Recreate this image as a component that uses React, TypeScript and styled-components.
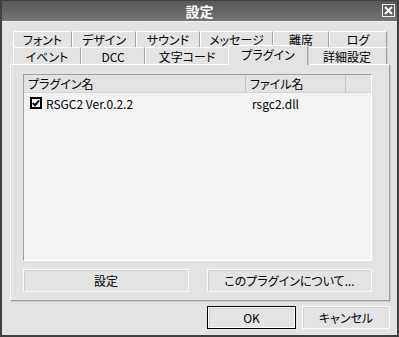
import React from 'react';
import styled, { createGlobalStyle } from 'styled-components';

const GlobalStyle = createGlobalStyle`
  html, body {
    margin: 0;
    padding: 0;
    background: #e3e3e3;
  }
  body {
    font-family: 'Noto Sans CJK JP', 'Liberation Sans', sans-serif;
    font-size: 12px;
    font-feature-settings: 'palt';
    color: #000;
  }
`;

const Window = styled.div`
    width: 399px;
    height: 337px;
    box-sizing: border-box;
    background: #e3e3e3;
    border: 2px solid #404040;
    border-top: 1px solid #404040;
    display: flex;
    flex-direction: column;
`;

const TitleBar = styled.div`
    height: 20px;
    flex-shrink: 0;
    background: linear-gradient(#585858, #747474);
    border-bottom: 1px solid #f2f2f2;
    display: flex;
    align-items: center;
    justify-content: center;
    position: relative;
    color: #fff;
    font-weight: bold;
    font-size: 14px;
`;

const CloseBox = styled.div`
    position: absolute;
    right: 2px;
    top: 3px;
    width: 11px;
    height: 11px;
    border: 1px solid #f0f0f0;
    background: #5e5e5e;
    display: flex;
    align-items: center;
    justify-content: center;
`;

const Body = styled.div`
    flex: 1;
    padding: 9px 7px 0 8px;
    display: flex;
    flex-direction: column;
`;

const TabStrip = styled.div`
    margin-left: 3px;
    width: 374px;
    display: flex;
    flex-direction: column;
`;

const TabRow = styled.div<{ height: number }>`
    display: flex;
    height: ${p => p.height}px;
    align-items: flex-end;
`;

const Tab = styled.div<{ width: number; active?: boolean }>`
    box-sizing: border-box;
    width: ${p => (p.active ? p.width + 2 : p.width)}px;
    height: ${p => (p.active ? 'calc(100% + 3px)' : '100%')};
    margin: ${p => (p.active ? '0 -1px -1px -1px' : '0')};
    background: #e3e3e3;
    border-top: 1px solid #fff;
    border-left: 1px solid #fff;
    border-right: 1px solid #a0a0a0;
    border-top-left-radius: 2px;
    border-top-right-radius: 2px;
    box-shadow: 1px 0 0 #d0d0d0;
    display: flex;
    align-items: center;
    justify-content: center;
    padding-bottom: ${p => (p.active ? 3 : 0)}px;
    position: relative;
    z-index: ${p => (p.active ? 2 : 1)};
    white-space: nowrap;
`;

const Panel = styled.div`
    box-sizing: border-box;
    width: 380px;
    height: 237px;
    background: #e3e3e3;
    border-top: 1px solid #fff;
    border-left: 1px solid #fff;
    border-right: 1px solid #a0a0a0;
    border-bottom: 1px solid #a0a0a0;
    box-shadow: 1px 1px 0 #c8c8c8;
    padding: 9px 16px 0 12px;
    display: flex;
    flex-direction: column;
`;

const ListView = styled.div`
    box-sizing: border-box;
    width: 349px;
    height: 187px;
    background: #f3f3f3;
    border-top: 1px solid #a0a0a0;
    border-left: 1px solid #a0a0a0;
    border-right: 1px solid #fff;
    border-bottom: 1px solid #fff;
    display: flex;
    flex-direction: column;
`;

const HeaderRow = styled.div`
    display: flex;
    height: 17px;
    background: #e3e3e3;
    border-bottom: 1px solid #d2d2d2;
`;

const HeaderCell = styled.div<{ width?: number }>`
    box-sizing: border-box;
    width: ${p => (p.width ? `${p.width}px` : 'auto')};
    flex: ${p => (p.width ? '0 0 auto' : '1')};
    padding-left: 4px;
    border-right: ${p => (p.width ? '1px solid #c4c4c4' : 'none')};
    display: flex;
    align-items: center;
`;

const ItemRow = styled.div`
    display: flex;
    height: 18px;
    align-items: center;
    margin-top: 1px;
`;

const ItemCell = styled.div<{ width?: number }>`
    box-sizing: border-box;
    width: ${p => (p.width ? `${p.width}px` : 'auto')};
    display: flex;
    align-items: center;
    gap: 4px;
    padding-left: 6px;
`;

const CheckBox = styled.div`
    box-sizing: border-box;
    width: 12px;
    height: 12px;
    border: 2px solid #000;
    background: #fff;
    display: flex;
    align-items: center;
    justify-content: center;
`;

const PanelButtons = styled.div`
    display: flex;
    gap: 18px;
    margin-top: 8px;
`;

const Button = styled.button<{ width: number; isDefault?: boolean }>`
    box-sizing: border-box;
    width: ${p => p.width}px;
    height: 23px;
    padding: 0;
    font: inherit;
    color: #000;
    background: #e3e3e3;
    border: 1px solid ${p => (p.isDefault ? '#000' : '#fafafa')};
    box-shadow: ${p =>
        p.isDefault
            ? 'inset 1px 1px 0 #fff, inset -1px -1px 0 #fff, inset 2px 2px 0 #cfcfcf'
            : 'inset 1px 1px 0 #cfcfcf'};
    display: flex;
    align-items: center;
    justify-content: center;
`;

const DialogButtons = styled.div`
    display: flex;
    justify-content: flex-end;
    gap: 6px;
    margin-top: 5px;
`;

const rowOne = [
    { label: 'フォント', width: 59 },
    { label: 'デザイン', width: 64 },
    { label: 'サウンド', width: 64 },
    { label: 'メッセージ', width: 73 },
    { label: '離席', width: 56 },
    { label: 'ログ', width: 58 },
];

const rowTwo = [
    { label: 'イベント', width: 68 },
    { label: 'DCC', width: 64 },
    { label: '文字コード', width: 84 },
    { label: 'プラグイン', width: 78, active: true },
    { label: '詳細設定', width: 80 },
];

export default function App() {
    return (
        <>
            <GlobalStyle />
            <Window>
                <TitleBar>
                    設定
                    <CloseBox>
                        <svg width="9" height="9" viewBox="0 0 9 9">
                            <path d="M1 1 L8 8 M8 1 L1 8" stroke="#fff" strokeWidth="2" />
                        </svg>
                    </CloseBox>
                </TitleBar>
                <Body>
                    <TabStrip>
                        <TabRow height={16}>
                            {rowOne.map(t => (
                                <Tab key={t.label} width={t.width}>{t.label}</Tab>
                            ))}
                        </TabRow>
                        <TabRow height={17}>
                            {rowTwo.map(t => (
                                <Tab key={t.label} width={t.width} active={t.active}>{t.label}</Tab>
                            ))}
                        </TabRow>
                    </TabStrip>
                    <Panel>
                        <ListView>
                            <HeaderRow>
                                <HeaderCell width={222}>プラグイン名</HeaderCell>
                                <HeaderCell width={100}>ファイル名</HeaderCell>
                                <HeaderCell />
                            </HeaderRow>
                            <ItemRow>
                                <ItemCell width={222}>
                                    <CheckBox>
                                        <svg width="8" height="8" viewBox="0 0 8 8">
                                            <path d="M0.8 4 L3 6.2 L7.2 1.4" stroke="#000" strokeWidth="2" fill="none" />
                                        </svg>
                                    </CheckBox>
                                    RSGC2 Ver.0.2.2
                                </ItemCell>
                                <ItemCell width={100}>rsgc2.dll</ItemCell>
                            </ItemRow>
                        </ListView>
                        <PanelButtons>
                            <Button width={166}>設定</Button>
                            <Button width={165}>このプラグインについて...</Button>
                        </PanelButtons>
                    </Panel>
                    <DialogButtons>
                        <Button width={89} isDefault>OK</Button>
                        <Button width={88}>キャンセル</Button>
                    </DialogButtons>
                </Body>
            </Window>
        </>
    );
}
